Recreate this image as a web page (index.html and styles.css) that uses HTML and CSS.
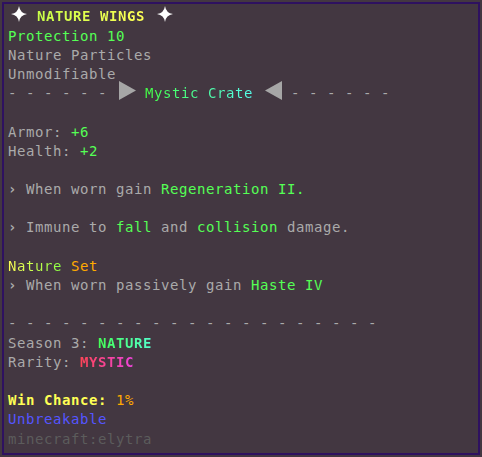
FILE: index.html
```html
<!DOCTYPE html>
<html lang="en">
<head>
<meta charset="utf-8">
<title>Nature Wings</title>
<link rel="stylesheet" href="styles.css">
</head>
<body>
<div class="tooltip">
  <div class="ln title">
    <svg class="star" width="16" height="16" viewBox="0 0 16 16"><path d="M8 0 Q9 7 16 8 Q9 9 8 16 Q7 9 0 8 Q7 7 8 0Z" fill="#ffffff"/></svg>
    <span class="b grad-wings">NATURE WINGS</span>
    <svg class="star" width="16" height="16" viewBox="0 0 16 16"><path d="M8 0 Q9 7 16 8 Q9 9 8 16 Q7 9 0 8 Q7 7 8 0Z" fill="#ffffff"/></svg>
  </div>
  <div class="ln green">Protection 10</div>
  <div class="ln gray">Nature Particles</div>
  <div class="ln gray">Unmodifiable</div>
  <div class="ln crate">
    <span class="gray">- - - - - - </span>
    <svg class="tri tri-r" width="17" height="19" viewBox="0 0 17 19"><path d="M0 0 L17 9.5 L0 19Z" fill="#a6a6a6"/></svg>
    <span> <span class="grad-crate">Mystic Crate</span> </span>
    <svg class="tri tri-l" width="17" height="19" viewBox="0 0 17 19"><path d="M17 0 L0 9.5 L17 19Z" fill="#a6a6a6"/></svg>
    <span class="gray"> - - - - - -</span>
  </div>
  <div class="ln"></div>
  <div class="ln gray">Armor: <span class="green">+6</span></div>
  <div class="ln gray">Health: <span class="green">+2</span></div>
  <div class="ln"></div>
  <div class="ln gray"><span class="b">›</span> When worn gain <span class="green">Regeneration II.</span></div>
  <div class="ln"></div>
  <div class="ln gray"><span class="b">›</span> Immune to <span class="green">fall</span> and <span class="green">collision</span> damage.</div>
  <div class="ln"></div>
  <div class="ln"><span class="grad-nature">Nature</span> <span class="orange">Set</span></div>
  <div class="ln gray"><span class="b">›</span> When worn passively gain <span class="green">Haste IV</span></div>
  <div class="ln"></div>
  <div class="ln gray">- - - - - - - - - - - - - - - - - - - - -</div>
  <div class="ln gray">Season 3: <span class="b grad-season">NATURE</span></div>
  <div class="ln gray">Rarity: <span class="b grad-mystic">MYSTIC</span></div>
  <div class="ln"></div>
  <div class="ln"><span class="b yellow">Win Chance:</span> <span class="orange">1%</span></div>
  <div class="ln blue">Unbreakable</div>
  <div class="ln dark">minecraft:elytra</div>
</div>
</body>
</html>
```
FILE: styles.css
```css
html, body {
  margin: 0;
  padding: 0;
  background: #433741;
}
body {
  width: 482px;
  height: 457px;
  padding: 2px;
  box-sizing: border-box;
}
.tooltip {
  box-sizing: border-box;
  width: 478px;
  height: 453px;
  border: 2px solid #2e1160;
  padding: 3.4px 4px 0 4px;
  font-family: "DejaVu Sans Mono", monospace;
  font-size: 14px;
  letter-spacing: 0.57px;
  color: #aaaaaa;
}
.ln {
  height: 19.2px;
  line-height: 19.2px;
  white-space: pre;
}
.title {
  display: flex;
  align-items: center;
}
.title .star {
  align-self: flex-start;
  margin-top: -1.5px;
  flex: none;
}
.title .star:first-child {
  margin-left: 3px;
  margin-right: 10px;
}
.title .star:last-child {
  margin-left: 12px;
}
.crate {
  display: flex;
  align-items: center;
}
.tri {
  flex: none;
  align-self: flex-start;
  margin-top: -3px;
  margin-left: 3px;
}
.b { font-weight: bold; }
.green { color: #55ff55; }
.gray { color: #aaaaaa; }
.blue { color: #5555ff; }
.dark { color: #5c5c5c; }
.yellow { color: #ffff55; }
.orange { color: #ffaa00; }
.grad-wings, .grad-crate, .grad-nature, .grad-season, .grad-mystic {
  -webkit-background-clip: text;
  background-clip: text;
  color: transparent;
}
.grad-wings { background-image: linear-gradient(90deg, #c8ff48, #ffff55); }
.grad-crate { background-image: linear-gradient(90deg, #44ff44, #55ffee); }
.grad-nature { background-image: linear-gradient(90deg, #ffff55, #88ff44); }
.grad-season { background-image: linear-gradient(90deg, #44ff55, #55ffcc); }
.grad-mystic { background-image: linear-gradient(90deg, #ff4455, #ee44dd); }
```
